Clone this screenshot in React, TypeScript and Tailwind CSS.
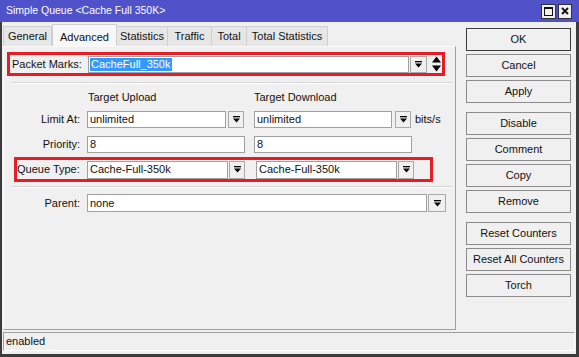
import React from "react";

const font = { fontFamily: '"Liberation Sans", Arial, sans-serif' };

function DropIcon() {
  return (
    <svg width="7" height="7" viewBox="0 0 7 7">
      <rect x="0" y="0" width="7" height="1.3" fill="#000" />
      <polygon points="0,2.5 7,2.5 3.5,6.5" fill="#000" />
    </svg>
  );
}

function DropBtn({ w = "w-[16px]", h = "h-[17px]" }: { w?: string; h?: string }) {
  return (
    <div className={`${w} ${h} shrink-0 flex items-center justify-center border border-[#a9a9a9] bg-[#f0f0f0]`}>
      <DropIcon />
    </div>
  );
}

function Field({ value, cls }: { value: string; cls: string }) {
  return (
    <div className={`${cls} shrink-0 flex items-center bg-white border border-[#a0a0a0] pl-[2px] text-[11px] text-[#111] leading-none`}>
      {value}
    </div>
  );
}

function Btn({ label, isDefault }: { label: string; isDefault?: boolean }) {
  return (
    <div
      className={`h-[23px] w-[105px] flex items-center justify-center text-[11px] text-[#111] bg-[#f0f0f0] border ${
        isDefault ? "border-[#3c3c3c]" : "border-[#8c8c8c]"
      }`}
    >
      {label}
    </div>
  );
}

const tabs = ["General", "Advanced", "Statistics", "Traffic", "Total", "Total Statistics"];
const tabWidths = ["w-[49px]", "w-[65px]", "w-[51px]", "w-[44px]", "w-[35px]", "w-[81px]"];

export default function App() {
  return (
    <div className="w-[579px] h-[357px] bg-[#f0f0f0] flex flex-col text-[#111]" style={font}>
      {/* Title bar */}
      <div className="h-[22px] bg-[#4f52c9] flex items-center pl-[6px] pr-[7px] shrink-0">
        <span className="text-white text-[10.5px] flex-1">Simple Queue &lt;Cache Full 350K&gt;</span>
        <div className="w-[15px] h-[15px] bg-[#f0f0f0] border border-[#333] flex items-center justify-center mr-[2px]">
          <div className="w-[9px] h-[9px] border border-[#111] border-t-2" />
        </div>
        <div className="w-[14px] h-[15px] bg-[#f0f0f0] border border-[#333] flex items-center justify-center">
          <svg width="8" height="8" viewBox="0 0 8 8">
            <path d="M1 1 L7 7 M7 1 L1 7" stroke="#111" strokeWidth="1.8" />
          </svg>
        </div>
      </div>

      {/* Body */}
      <div className="flex-1 flex flex-col border-l-2 border-r-[3px] border-b-[3px] border-[#3c3c3c]">
        <div className="h-[310px] flex">
          {/* Left column */}
          <div className="ml-[1px] w-[453px] flex flex-col">
            {/* Tabs */}
            <div className="h-[24px] pt-[2px] flex items-end">
              {tabs.map((t, i) =>
                i === 1 ? (
                  <div
                    key={t}
                    className={`${tabWidths[i]} h-[22px] bg-[#f7f7f7] border border-b-0 border-[#cfcfcf] flex items-start justify-center pt-[4px] text-[11px]`}
                  >
                    {t}
                  </div>
                ) : (
                  <div
                    key={t}
                    className={`${tabWidths[i]} h-[20px] bg-[#e6e6e6] border border-b-0 border-l-0 border-[#cfcfcf] first:border-l flex items-center justify-center text-[11px]`}
                  >
                    {t}
                  </div>
                )
              )}
            </div>

            {/* Panel */}
            <div className="h-[284px] bg-[#f0f0f0] border border-t-[#fcfcfc] border-l-[#fcfcfc] border-r-[#a0a0a0] border-b-[#a0a0a0] flex flex-col">
              {/* Packet marks */}
              <div className="mt-[5px] ml-[3px] w-[438px] h-[24px] border-[3px] border-[#e81c24] flex items-center">
                <span className="w-[78px] pl-[2px] text-[11px]">Packet Marks:</span>
                <div className="w-[321px] h-[17px] shrink-0 flex items-center bg-white border border-[#a0a0a0] pl-[1px]">
                  <span className="bg-[#3399ff] text-white text-[11px] leading-[13px] px-[1px]">CacheFull_350k</span>
                </div>
                <div className="ml-[1px]">
                  <DropBtn w="w-[17px]" />
                </div>
                <svg className="ml-[5px]" width="9" height="16" viewBox="0 0 9 16">
                  <polygon points="4.5,0.5 9,6.5 0,6.5" fill="#000" />
                  <polygon points="0,9.5 9,9.5 4.5,15.5" fill="#000" />
                </svg>
              </div>

              <div className="mt-[6px] ml-[8px] w-[440px] h-[2px] border-t border-[#d4d4d4] border-b border-b-white" />

              {/* Headers */}
              <div className="mt-[7px] h-[13px] flex text-[11px] leading-[13px]">
                <span className="ml-[84px] w-[166px]">Target Upload</span>
                <span>Target Download</span>
              </div>

              {/* Limit At */}
              <div className="mt-[7px] h-[17px] flex items-center text-[11px]">
                <span className="w-[76px] text-right">Limit At:</span>
                <div className="ml-[7px] flex items-center">
                  <Field value="unlimited" cls="w-[139px] h-[17px]" />
                  <div className="ml-[2px]"><DropBtn /></div>
                  <div className="ml-[10px]"><Field value="unlimited" cls="w-[138px] h-[17px]" /></div>
                  <div className="ml-[3px]"><DropBtn /></div>
                  <span className="ml-[4px]">bits/s</span>
                </div>
              </div>

              {/* Priority */}
              <div className="mt-[8px] h-[17px] flex items-center text-[11px]">
                <span className="w-[76px] text-right">Priority:</span>
                <div className="ml-[7px] flex items-center">
                  <Field value="8" cls="w-[158px] h-[17px]" />
                  <div className="ml-[9px]"><Field value="8" cls="w-[158px] h-[17px]" /></div>
                </div>
              </div>

              {/* Queue Type */}
              <div className="mt-[4px] ml-[10px] w-[419px] h-[25px] border-[3px] border-[#e81c24] flex items-center text-[11px]">
                <span className="w-[70px]">Queue Type:</span>
                <Field value="Cache-Full-350k" cls="w-[141px] h-[18px]" />
                <div className="ml-[1px]"><DropBtn h="h-[18px]" /></div>
                <div className="ml-[11px]"><Field value="Cache-Full-350k" cls="w-[141px] h-[18px]" /></div>
                <div className="ml-[1px]"><DropBtn h="h-[18px]" /></div>
              </div>

              <div className="mt-[4px] ml-[8px] w-[440px] h-[2px] border-t border-[#d4d4d4] border-b border-b-white" />

              {/* Parent */}
              <div className="mt-[6px] h-[18px] flex items-center text-[11px]">
                <span className="w-[76px] text-right">Parent:</span>
                <div className="ml-[7px] flex items-center">
                  <Field value="none" cls="w-[340px] h-[18px]" />
                  <div className="ml-[1px]"><DropBtn w="w-[18px]" h="h-[18px]" /></div>
                </div>
              </div>
            </div>
          </div>

          {/* Right buttons */}
          <div className="ml-[10px] pt-[6px] flex flex-col">
            <div className="flex flex-col gap-[3px]">
              <Btn label="OK" isDefault />
              <Btn label="Cancel" />
              <Btn label="Apply" />
            </div>
            <div className="mt-[9px] flex flex-col gap-[3px]">
              <Btn label="Disable" />
              <Btn label="Comment" />
              <Btn label="Copy" />
              <Btn label="Remove" />
            </div>
            <div className="mt-[9px] flex flex-col gap-[3px]">
              <Btn label="Reset Counters" />
              <Btn label="Reset All Counters" />
              <Btn label="Torch" />
            </div>
          </div>
        </div>

        {/* Status bar */}
        <div className="ml-[1px] w-[572px] h-[19px] border border-t-[#a0a0a0] border-l-[#a0a0a0] border-r-white border-b-white flex items-center pl-[2px] text-[11px]">
          enabled
        </div>
      </div>
    </div>
  );
}
